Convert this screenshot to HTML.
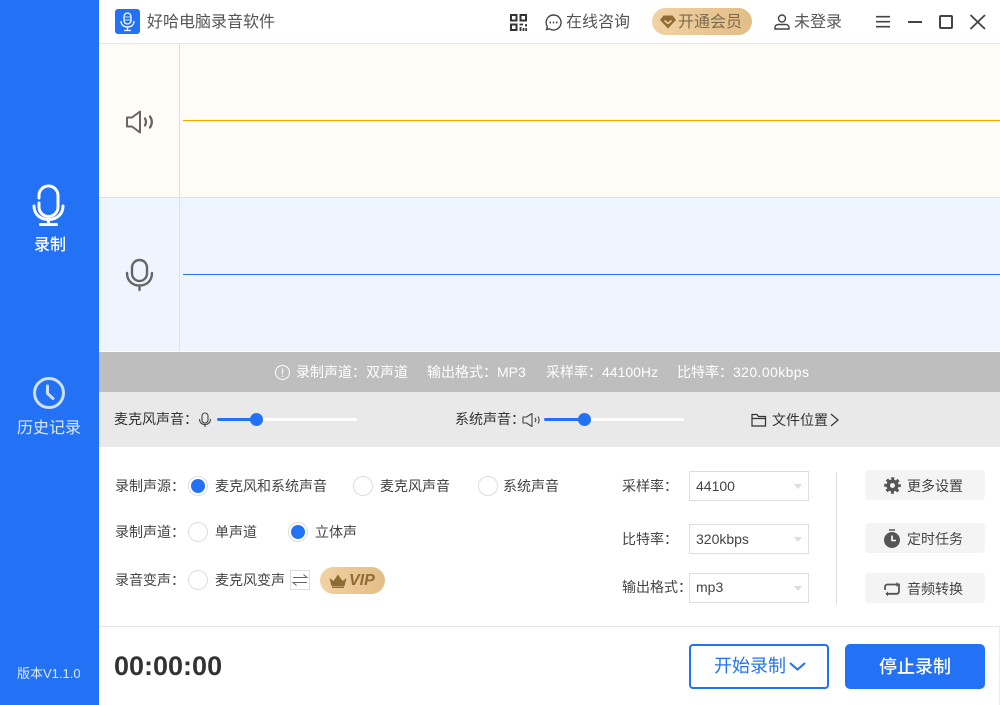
<!DOCTYPE html>
<html lang="zh-CN"><head><meta charset="utf-8"><title>好哈电脑录音软件</title>
<style>
html,body{margin:0;padding:0;width:1000px;height:705px;overflow:hidden;background:#fff}
body{position:relative;font-family:"Liberation Sans","Noto Sans CJK SC",sans-serif;color:#444}
div,span,svg{position:absolute;display:block}
b{font-weight:normal;letter-spacing:.4px}
.t{white-space:nowrap;line-height:20px;height:20px}
.f14{font-size:14px}.f13{font-size:13px}.f16{font-size:16px}
.radio{width:18px;height:18px;border:1px solid #ddd;border-radius:50%;background:#fff}
.radio.on:after{content:"";position:absolute;left:2px;top:2px;width:14px;height:14px;border-radius:50%;background:#2372f5}
.sel{left:689px;width:118px;height:28px;border:1px solid #ddd;background:#fff}
.sel i{position:absolute;left:104px;top:12px;border-left:4px solid transparent;border-right:4px solid transparent;border-top:5px solid #ddd}
.btn{left:865px;width:120px;height:30px;background:#f4f4f4;border-radius:4px}
</style></head><body>

<div style="left:0;top:0;width:99px;height:705px;background:#2371f5"></div>
<svg style="left:31px;top:184px" width="36" height="44" viewBox="0 0 36 44" fill="none" stroke="#fff" stroke-width="3" stroke-linecap="round"><path d="M8 14V11.500A9.500 9.500 0 0 1 27 11.500V23A9.500 9.500 0 0 1 8 23V19"/><path d="M3 22C3 30 9 35.500 17.500 35.500S32 30 32 22"/><path d="M17.500 36V40M9.500 40.500H25.500"/></svg>
<div class="t f16" style="left:34px;top:236px;color:#fff;font-weight:500">录制</div>
<svg style="left:32px;top:376px" width="34" height="34" viewBox="0 0 34 34" fill="none" stroke="#cfe0fd" stroke-width="3"><circle cx="17" cy="17" r="14.500"/><path d="M15.500 10V17.500L21 22.500" stroke-linecap="round"/></svg>
<div class="t f16" style="left:17px;top:419px;color:#dce8fe">历史记录</div>
<div class="t" style="left:17px;top:664px;color:#dce8fe;font-size:13px">版本V1.1.0</div>

<!-- title bar -->
<div style="left:99px;top:43px;width:901px;height:1px;background:#e6e6e6"></div>
<div style="left:115px;top:9px;width:25px;height:25px;border-radius:3px;background:#2371f5"></div>
<svg style="left:119px;top:12px" width="17" height="20" viewBox="0 0 17 20" fill="none" stroke="#fff" stroke-width="1.300"><rect x="5" y="1" width="7" height="11" rx="3.500"/><path d="M5 5H12M5 8H12" stroke-width=".8"/><path d="M2 9C2 13 5 15 8.500 15S15 13 15 9M8.500 15V18M5 18.500H12"/></svg>
<div class="t f16" style="left:147px;top:13px;color:#555">好哈电脑录音软件</div>

<svg style="left:510px;top:14px" width="17" height="17" viewBox="0 0 17 17" fill="none" stroke="#333" stroke-width="2"><rect x="1" y="1" width="5.500" height="5.500"/><rect x="10.500" y="1" width="5.500" height="5.500"/><rect x="1" y="10.500" width="5.500" height="5.500"/><path d="M9.500 10.500H13M16 10V12.500M10.500 13V17M13.500 14V17M16.200 14V17" stroke-width="1.800"/></svg>
<svg style="left:545px;top:14px" width="17" height="17" viewBox="0 0 17 17" fill="none" stroke="#444" stroke-width="1.400"><path d="M8.500 1A7.500 7.500 0 1 1 4.500 14.800L1.500 15.500L2.300 12.500A7.500 7.500 0 0 1 8.500 1Z"/><path d="M4.500 8.500H6M7.800 8.500H9.300M11 8.500H12.500" stroke-width="1.700"/></svg>
<div class="t f16" style="left:566px;top:13px;color:#555">在线咨询</div>
<div style="left:652px;top:8px;width:100px;height:27px;border-radius:14px;background:linear-gradient(90deg,#f1d2a3,#e2bd87)"></div>
<svg style="left:660px;top:15px" width="16" height="14" viewBox="0 0 16 14"><path d="M3.500 0.500H12.500L16 5L8 13.500L0 5Z" fill="#8e6a35"/><path d="M4.500 5.500L8 8.500L11.500 5.500" fill="none" stroke="#f0d2a5" stroke-width="1.500"/></svg>
<div class="t f16" style="left:678px;top:13px;color:#7d6a4d">开通会员</div>
<svg style="left:774px;top:14px" width="16" height="16" viewBox="0 0 16 16" fill="none" stroke="#444" stroke-width="1.400"><circle cx="8" cy="4.500" r="3.500"/><path d="M1 15V13.500C1 11.500 2.500 10.500 4.500 10.500H11.500C13.500 10.500 15 11.500 15 13.500V15Z"/></svg>
<div class="t f16" style="left:794px;top:13px;color:#555">未登录</div>
<svg style="left:876px;top:14px" width="110" height="16" viewBox="0 0 110 16" fill="none" stroke="#444"><path d="M0 2.700H14M0 7.700H14M0 12.700H14" stroke-width="1.600"/><path d="M32 8H46" stroke-width="2"/><rect x="64" y="2" width="12" height="12" stroke-width="2" rx="1"/><path d="M94.500 1L109 15M109 1L94.500 15" stroke-width="1.800"/></svg>

<!-- wave panels -->
<div style="left:99px;top:44px;width:901px;height:153px;background:#fffbf6"></div>
<div style="left:99px;top:197px;width:901px;height:1px;background:#e2e2e2"></div>
<div style="left:99px;top:198px;width:901px;height:153px;background:#eef5ff"></div>
<div style="left:179px;top:44px;width:1px;height:307px;background:#e0e0e0"></div>
<div style="left:183px;top:120px;width:817px;height:1px;background:#ffa500"></div>
<div style="left:183px;top:274px;width:817px;height:1px;background:#2371f5"></div>
<svg style="left:126px;top:110px" width="28" height="24" viewBox="0 0 28 24" fill="none" stroke="#666" stroke-width="2" stroke-linejoin="round" stroke-linecap="round"><path d="M1 7.500H6L14 1.500V22.500L6 16.500H1Z"/><path d="M19 8.500C20.300 10.500 20.300 13.500 19 15.500" stroke-width="2.300"/><path d="M24 6.500C26.300 10 26.300 14 24 17.500" stroke-width="2.300"/></svg>
<svg style="left:125px;top:258px" width="29" height="34" viewBox="0 0 29 34" fill="none" stroke="#666" stroke-width="2.400" stroke-linecap="round"><rect x="7" y="2" width="15" height="21" rx="7.500"/><path d="M2 15C2 23 7.500 27.500 14.500 27.500S27 23 27 15M14.500 28V32"/></svg>

<!-- info bar -->
<div style="left:99px;top:352px;width:901px;height:40px;background:#bebebe"></div>
<svg style="left:275px;top:365px" width="15" height="15" viewBox="0 0 15 15" fill="none" stroke="#fff"><circle cx="7.500" cy="7.500" r="7"/><path d="M7.500 3.500V9M7.500 10.500V12" stroke-width="1.200"/></svg>
<div class="t f14" style="left:296px;top:362px;color:#fff">录制声道：双声道</div>
<div class="t f14" style="left:427px;top:362px;color:#fff">输出格式：MP3</div>
<div class="t f14" style="left:546px;top:362px;color:#fff">采样率：44100Hz</div>
<div class="t f14" style="left:677px;top:362px;color:#fff">比特率：<b>320.00kbps</b></div>

<!-- sliders -->
<div style="left:99px;top:392px;width:901px;height:55px;background:#e9e9e9"></div>
<div class="t f14" style="left:114px;top:409px;color:#333">麦克风声音：</div>
<svg style="left:198px;top:412px" width="14" height="16" viewBox="0 0 14 16" fill="none" stroke="#444" stroke-width="1.100"><rect x="4" y="1" width="6" height="10" rx="3"/><path d="M1.500 7C1.500 10.500 4 12.500 7 12.500S12.500 10.500 12.500 7M7 12.500V15"/></svg>
<div style="left:217px;top:418px;width:140px;height:3px;border-radius:2px;background:#fff"></div>
<div style="left:217px;top:418px;width:39px;height:3px;border-radius:2px;background:#2371f5"></div>
<div style="left:250px;top:413px;width:13px;height:13px;border-radius:50%;background:#2371f5"></div>

<div class="t f14" style="left:455px;top:409px;color:#333">系统声音：</div>
<svg style="left:522px;top:412px" width="19" height="16" viewBox="0 0 19 16" fill="none" stroke="#444" stroke-width="1.100" stroke-linejoin="round"><path d="M1 5H4.500L10 1.500V14.500L4.500 11H1Z"/><path d="M13 6C14 7.200 14 8.800 13 10M16 4.500C17.500 6.800 17.500 9.200 16 11.500"/></svg>
<div style="left:544px;top:418px;width:140px;height:3px;border-radius:2px;background:#fff"></div>
<div style="left:544px;top:418px;width:39px;height:3px;border-radius:2px;background:#2371f5"></div>
<div style="left:578px;top:413px;width:13px;height:13px;border-radius:50%;background:#2371f5"></div>

<svg style="left:751px;top:413px" width="16" height="14" viewBox="0 0 16 14" fill="none" stroke="#333" stroke-width="1.200"><path d="M1 4V1.500H6L7.500 3.500H14.500V13H1ZM1 5.500H14.500"/></svg>
<div class="t f14" style="left:772px;top:410px;color:#333">文件位置</div>
<svg style="left:830px;top:413px" width="9" height="14" viewBox="0 0 9 14" fill="none" stroke="#333" stroke-width="1.200"><path d="M1 1L8 7L1 13"/></svg>

<!-- options -->
<div class="t f14" style="left:115px;top:476px">录制声源：</div>
<div class="radio on" style="left:188px;top:476px"></div>
<div class="t f14" style="left:215px;top:476px">麦克风和系统声音</div>
<div class="radio" style="left:353px;top:476px"></div>
<div class="t f14" style="left:380px;top:476px">麦克风声音</div>
<div class="radio" style="left:478px;top:476px"></div>
<div class="t f14" style="left:503px;top:476px">系统声音</div>

<div class="t f14" style="left:115px;top:522px">录制声道：</div>
<div class="radio" style="left:188px;top:522px"></div>
<div class="t f14" style="left:215px;top:522px">单声道</div>
<div class="radio on" style="left:288px;top:522px"></div>
<div class="t f14" style="left:315px;top:522px">立体声</div>

<div class="t f14" style="left:115px;top:570px">录音变声：</div>
<div class="radio" style="left:188px;top:570px"></div>
<div class="t f14" style="left:215px;top:570px">麦克风变声</div>
<svg style="left:290px;top:570px" width="20" height="20" viewBox="0 0 20 20" fill="none"><rect x=".5" y=".5" width="19" height="19" fill="#fff" stroke="#ddd"/><path d="M3 7.500H17L13.500 4.500M17 12.500H3L6.500 15.500" stroke="#666"/></svg>
<div style="left:320px;top:567px;width:65px;height:27px;border-radius:14px;background:linear-gradient(90deg,#f1d2a3,#e2bd87)"></div>
<svg style="left:329px;top:574px" width="18" height="14" viewBox="0 0 18 14"><path d="M0.500 4L4.500 7L9 0.500L13.500 7L17.500 4L15.500 12H2.500ZM3 12.500H15V14H3Z" fill="#8e6a35"/></svg>
<div class="t" style="left:349px;top:571px;font-size:16px;font-weight:bold;font-style:italic;color:#8e6a35">VIP</div>

<div class="t f14" style="left:622px;top:476px">采样率：</div>
<div class="sel" style="top:471px"><i></i></div>
<div class="t f14" style="left:696px;top:476px">44100</div>
<div class="t f14" style="left:622px;top:529px">比特率：</div>
<div class="sel" style="top:524px"><i></i></div>
<div class="t f14" style="left:696px;top:529px">320kbps</div>
<div class="t f14" style="left:622px;top:577px">输出格式：</div>
<div class="sel" style="top:573px"><i></i></div>
<div class="t f14" style="left:696px;top:577px">mp3</div>

<div style="left:836px;top:472px;width:1px;height:132px;background:#ddd"></div>

<div class="btn" style="top:470px"></div>
<svg style="left:884px;top:477px" width="17" height="17" viewBox="0 0 17 17" fill="none" stroke="#555"><circle cx="8.500" cy="8.500" r="4.300" stroke-width="3.600"/><circle cx="8.500" cy="8.500" r="6.800" stroke-width="3" stroke-dasharray="2.900 2.440" stroke-dashoffset="1.400"/></svg>
<div class="t f14" style="left:907px;top:476px;color:#444">更多设置</div>

<div class="btn" style="top:523px"></div>
<svg style="left:884px;top:529px" width="16" height="19" viewBox="0 0 16 19"><circle cx="8" cy="11" r="8" fill="#555"/><path d="M5 1H11" stroke="#555" stroke-width="1.500"/><path d="M8 6.500V11.500H12" fill="none" stroke="#fff" stroke-width="1.600"/></svg>
<div class="t f14" style="left:907px;top:529px;color:#444">定时任务</div>

<div class="btn" style="top:573px"></div>
<svg style="left:884px;top:581px" width="17" height="17" viewBox="0 0 17 17" fill="none" stroke="#555" stroke-width="1.800"><path d="M1 9V6C1 4.500 2 3.500 3.500 3.500H15V10C15 11.800 14 12.800 12.500 12.800H2"/><path d="M12.500 1L15.500 3.500L12.500 6M4 15.500L1.500 12.800L4 10.500" fill="#555" stroke="none"/></svg>
<div class="t f14" style="left:907px;top:579px;color:#444">音频转换</div>

<!-- footer -->
<div style="left:99px;top:626px;width:901px;height:1px;background:#e6e6e6"></div>
<div style="left:999px;top:626px;width:1px;height:79px;background:#eee"></div>
<div class="t" style="left:114px;top:656px;font-size:27px;font-weight:bold;color:#333">00:00:00</div>
<div style="left:689px;top:644px;width:136px;height:41px;border:2px solid #2371f5;border-radius:4px;background:#fff"></div>
<div class="t" style="left:714px;top:656px;font-size:18px;color:#2371f5">开始录制</div>
<svg style="left:789px;top:661px" width="18" height="11" viewBox="0 0 18 11" fill="none" stroke="#2371f5" stroke-width="2"><path d="M1 2L8.500 8.500L16 2"/></svg>
<div style="left:845px;top:644px;width:140px;height:45px;border-radius:5px;background:#2371f5"></div>
<div class="t" style="left:879px;top:657px;font-size:18px;color:#fff;font-weight:500">停止录制</div>
</body></html>
